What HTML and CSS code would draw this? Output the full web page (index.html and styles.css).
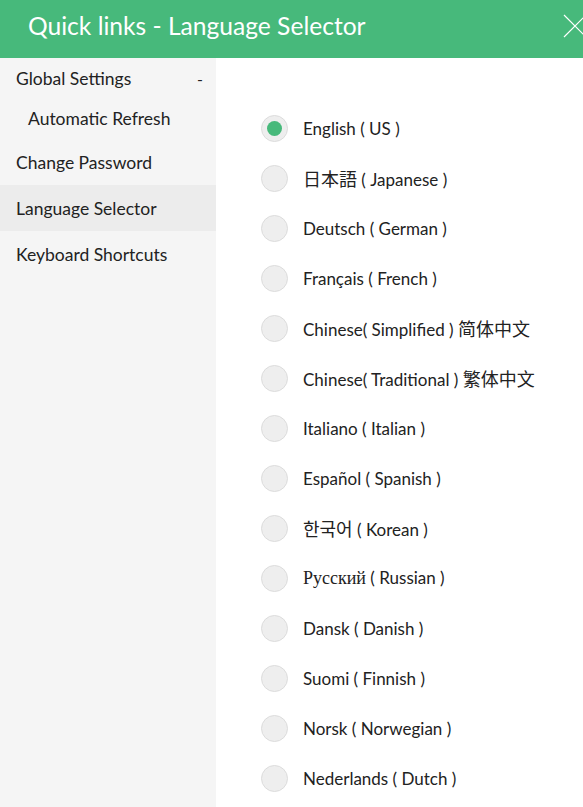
FILE: index.html
```
<!DOCTYPE html>
<html lang="en">
<head>
<meta charset="utf-8">
<title>Quick links - Language Selector</title>
<link rel="stylesheet" href="styles.css">
</head>
<body>
<div class="dialog">
  <header class="header">
    <h1 class="title">Quick links - Language Selector</h1>
    <span class="close" aria-label="Close">
      <svg width="24" height="24" viewBox="0 0 24 24"><path d="M1 1 L23 23 M23 1 L1 23" stroke="#ffffff" stroke-width="1.2" fill="none"/></svg>
    </span>
  </header>
  <div class="body">
    <nav class="sidebar">
      <div class="nav-item nav-group">Global Settings<span class="toggle">-</span></div>
      <div class="nav-item nav-sub">Automatic Refresh</div>
      <div class="nav-item nav-main">Change Password</div>
      <div class="nav-item nav-main active">Language Selector</div>
      <div class="nav-item nav-main">Keyboard Shortcuts</div>
    </nav>
    <main class="content">
      <ul class="lang-list">
        <li class="lang"><span class="radio checked"></span><span class="label">English ( US )</span></li>
        <li class="lang"><span class="radio"></span><span class="label"><span class="cjk-jp">日本語</span> ( Japanese )</span></li>
        <li class="lang"><span class="radio"></span><span class="label">Deutsch ( German )</span></li>
        <li class="lang"><span class="radio"></span><span class="label">Français ( French )</span></li>
        <li class="lang"><span class="radio"></span><span class="label">Chinese( Simplified ) <span class="cjk-sc">简体中文</span></span></li>
        <li class="lang"><span class="radio"></span><span class="label">Chinese( Traditional ) <span class="cjk-tc">繁体中文</span></span></li>
        <li class="lang"><span class="radio"></span><span class="label">Italiano ( Italian )</span></li>
        <li class="lang"><span class="radio"></span><span class="label">Español ( Spanish )</span></li>
        <li class="lang"><span class="radio"></span><span class="label"><span class="cjk-kr">한국어</span> ( Korean )</span></li>
        <li class="lang"><span class="radio"></span><span class="label"><span class="serif">Русский</span> ( Russian )</span></li>
        <li class="lang"><span class="radio"></span><span class="label">Dansk ( Danish )</span></li>
        <li class="lang"><span class="radio"></span><span class="label">Suomi ( Finnish )</span></li>
        <li class="lang"><span class="radio"></span><span class="label">Norsk ( Norwegian )</span></li>
        <li class="lang"><span class="radio"></span><span class="label">Nederlands ( Dutch )</span></li>
      </ul>
    </main>
  </div>
</div>
</body>
</html>
```
FILE: styles.css
```
* { box-sizing: border-box; }
html, body { margin: 0; padding: 0; }
body {
  font-family: Lato, "Noto Sans", sans-serif;
  color: #222222;
  background: #ffffff;
  width: 583px;
  height: 807px;
  overflow: hidden;
}
.dialog { display: flex; flex-direction: column; height: 807px; }
.header {
  height: 58px;
  background: #47b97b;
  display: flex;
  align-items: center;
  justify-content: space-between;
  padding-left: 28px;
  flex-shrink: 0;
}
.title {
  margin: 0;
  font-size: 24.6px;
  font-weight: 400;
  color: #ffffff;
  line-height: 1;
  padding-bottom: 5px;
}
.close {
  display: flex;
  width: 20px;
  height: 24px;
  overflow: hidden;
  margin-bottom: 6px;
}
.close svg { flex-shrink: 0; }
.body { display: flex; flex: 1; }
.sidebar {
  width: 216px;
  background: #f5f5f5;
  flex-shrink: 0;
}
.nav-item {
  display: flex;
  align-items: center;
  font-size: 17.5px;
  padding-left: 16px;
  color: #222222;
}
.nav-group { height: 40px; justify-content: space-between; padding-right: 13px; }
.nav-sub { height: 41px; padding-left: 28px; }
.nav-main { height: 46px; }
.active { background: #ececec; }
.toggle { font-size: 16px; }
.content { flex: 1; }
.lang-list {
  list-style: none;
  margin: 0;
  padding: 45px 0 0 45px;
}
.lang {
  height: 50px;
  display: flex;
  align-items: center;
  gap: 15px;
  font-size: 17px;
}
.radio {
  width: 27px;
  height: 27px;
  border-radius: 50%;
  background: #eeeeee;
  border: 1px solid #dcdcdc;
  display: flex;
  align-items: center;
  justify-content: center;
  flex-shrink: 0;
}
.radio.checked::after {
  content: "";
  width: 15px;
  height: 15px;
  border-radius: 50%;
  background: #47b97b;
}
.label { white-space: nowrap; }
.cjk-jp { font-family: "Noto Sans CJK JP", sans-serif; font-size: 18px; }
.cjk-sc { font-family: "Noto Sans CJK SC", sans-serif; font-size: 18px; }
.cjk-tc { font-family: "Noto Sans CJK TC", sans-serif; font-size: 18px; }
.cjk-kr { font-family: "Noto Sans CJK KR", sans-serif; font-size: 18px; }
.serif { font-family: "Liberation Serif", serif; font-size: 18px; }
```
